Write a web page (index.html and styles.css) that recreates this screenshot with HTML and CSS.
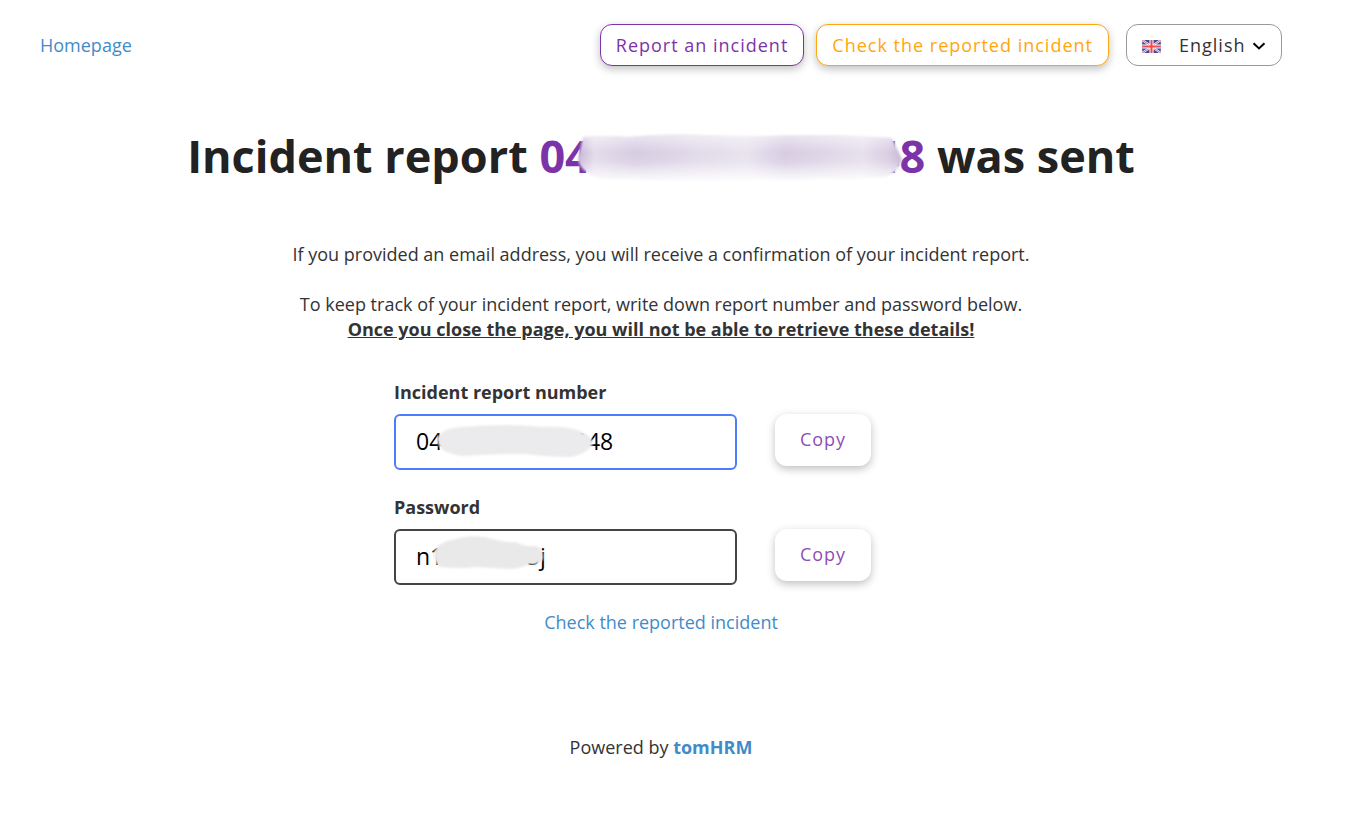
FILE: index.html
```html
<!DOCTYPE html>
<html lang="en">
<head>
  <meta charset="UTF-8">
  <meta name="viewport" content="width=device-width, initial-scale=1">
  <title>Incident report was sent</title>
  <link rel="stylesheet" href="styles.css">
</head>
<body>

  <header class="header">
    <a href="#" class="link">Homepage</a>
    <nav class="nav-buttons">
      <button type="button" class="button button-report">Report an incident</button>
      <button type="button" class="button button-check">Check the reported incident</button>
      <div class="language">
        <svg class="flag" viewBox="0 0 20 14" aria-hidden="true">
          <rect width="20" height="14" fill="#3a4a9f"/>
          <path d="M0 0L20 14M20 0L0 14" stroke="#f0e6f0" stroke-width="2.4"/>
          <path d="M0 0L20 14M20 0L0 14" stroke="#e8606a" stroke-width="1"/>
          <path d="M10 0V14M0 7H20" stroke="#fff" stroke-width="4.4"/>
          <path d="M10 0V14M0 7H20" stroke="#ea4a50" stroke-width="2.2"/>
        </svg>
        <select class="language-select" aria-label="Language">
          <option>English</option>
        </select>
        <svg class="chevron" viewBox="0 0 14 8" aria-hidden="true">
          <path d="M1.5 1.2L7 6.4L12.5 1.2" fill="none" stroke="#000" stroke-width="2"/>
        </svg>
      </div>
    </nav>
  </header>

  <main class="content">
    <h1 class="title">Incident report
      <span class="number">040000000000048<svg class="smudge smudge-title" viewBox="0 0 328 48" preserveAspectRatio="none" aria-hidden="true">
        <defs>
          <linearGradient id="title-fill">
            <stop offset="0" stop-color="#c6b6d6"/>
            <stop offset=".05" stop-color="#e3dcea"/>
            <stop offset=".18" stop-color="#d7cce2"/>
            <stop offset=".38" stop-color="#e2dbea"/>
            <stop offset=".52" stop-color="#e8e3ef"/>
            <stop offset=".64" stop-color="#d7cce2"/>
            <stop offset=".88" stop-color="#e6e0ec"/>
            <stop offset=".96" stop-color="#d8cde2"/>
            <stop offset="1" stop-color="#c6b6d6"/>
          </linearGradient>
          <linearGradient id="title-shade" x2="0" y2="1">
            <stop offset="0" stop-color="#fff" stop-opacity=".5"/>
            <stop offset=".4" stop-color="#fff" stop-opacity="0"/>
            <stop offset=".6" stop-color="#fff" stop-opacity=".1"/>
            <stop offset="1" stop-color="#fff" stop-opacity=".9"/>
          </linearGradient>
          <filter id="soft" x="-5%" y="-10%" width="110%" height="120%"><feGaussianBlur stdDeviation="1"/></filter>
        </defs>
        <g filter="url(#soft)">
          <path d="M7 4Q30 2 52 4Q90 0 128 2Q160 3 190 3Q240 1 282 3L316 5L326 26Q322 42 306 44Q260 47 190 46Q90 48 24 45Q4 39 2 26Z" fill="url(#title-fill)"/>
          <path d="M7 4Q30 2 52 4Q90 0 128 2Q160 3 190 3Q240 1 282 3L316 5L326 26Q322 42 306 44Q260 47 190 46Q90 48 24 45Q4 39 2 26Z" fill="url(#title-shade)"/>
        </g>
      </svg></span>
      was sent</h1>

    <p class="text">If you provided an email address, you will receive a confirmation of your incident report.</p>
    <p class="text">To keep track of your incident report, write down report number and password below.<br>
      <strong class="warning">Once you close the page, you will not be able to retrieve these details!</strong></p>

    <div class="details">
      <div class="field">
        <label class="label" for="report-number">Incident report number</label>
        <div class="input-wrap">
          <input type="text" id="report-number" class="input input-active" value="040000000000048" readonly>
          <svg class="smudge smudge-number" viewBox="0 0 156 34" aria-hidden="true">
            <path d="M0 14Q6 4 24 3Q74-1 104 3Q132 2 142 7Q156 12 156 20Q150 30 134 33Q112 33 88 30Q52 30 26 32Q8 30 2 22Z" fill="#ebebed"/>
          </svg>
        </div>
      </div>
      <button type="button" class="button button-copy">Copy</button>

      <div class="field">
        <label class="label" for="password">Password</label>
        <div class="input-wrap">
          <input type="text" id="password" class="input" value="n100w0003j" readonly>
          <svg class="smudge smudge-password" viewBox="0 0 110 36" aria-hidden="true">
            <path d="M0 18Q2 8 18 5Q42-2 58 4Q74 8 82 7Q90 12 102 11Q110 14 109 24Q106 30 96 29Q84 34 76 34Q58 33 42 32Q28 34 6 32Q0 28 0 18Z" fill="#e9e9e9"/>
          </svg>
        </div>
      </div>
      <button type="button" class="button button-copy">Copy</button>
    </div>

    <a href="#" class="link">Check the reported incident</a>
  </main>

  <footer class="footer">
    Powered by <a href="#" class="link link-brand">tomHRM</a>
  </footer>

</body>
</html>
```
FILE: styles.css
```css
:root {
  --text: #333;
  --heading: #222;
  --purple: #7d33a8;
  --orange: #ffa60d;
  --link: #428bca;
  --shadow: 0 3px 8px rgba(0, 0, 0, 0.25);
}

* {
  box-sizing: border-box;
}

body {
  margin: 0;
  padding: 24px 77px 40px 40px;
  background: #fff;
  color: var(--text);
  font-family: 'Open Sans', sans-serif;
  font-size: 18px;
  line-height: 25px;
}

.header {
  display: flex;
  justify-content: space-between;
  align-items: center;
}

.nav-buttons {
  display: flex;
  align-items: center;
  gap: 12px;
}

.link {
  color: var(--link);
  text-decoration: none;
}

.link-brand {
  font-weight: 700;
}

.button {
  height: 42px;
  padding: 0 15px;
  background: #fff;
  border: 1px solid transparent;
  border-radius: 12px;
  box-shadow: var(--shadow);
  font-family: inherit;
  font-size: 18px;
  letter-spacing: 1px;
  white-space: nowrap;
  cursor: pointer;
}

.button-report {
  color: var(--purple);
  border-color: var(--purple);
}

.button-check {
  color: var(--orange);
  border-color: var(--orange);
}

.button-copy {
  height: 52px;
  padding-bottom: 2px;
  color: #8f4db5;
}

.language {
  position: relative;
  margin-left: 5px;
}

.language-select {
  width: 156px;
  height: 42px;
  padding: 0 34px 0 52px;
  appearance: none;
  background: #fff;
  border: 1px solid #999;
  border-radius: 12px;
  color: var(--text);
  font-family: inherit;
  font-size: 18px;
  letter-spacing: 1px;
}

.flag,
.chevron {
  position: absolute;
  pointer-events: none;
}

.flag {
  top: 16px;
  left: 16px;
  width: 19px;
  height: 13px;
}

.chevron {
  top: 18px;
  right: 16px;
  width: 14px;
  height: 8px;
}

.content {
  display: flex;
  flex-direction: column;
  align-items: center;
  text-align: center;
}

.title {
  margin: 58px 0 54px;
  color: var(--heading);
  font-size: 45px;
  line-height: 64px;
}

.number {
  position: relative;
  color: var(--purple);
}

.text {
  margin: 0 0 25px;
}

.warning {
  text-decoration: underline;
}

.details {
  display: grid;
  grid-template-columns: 343px 96px;
  column-gap: 38px;
  row-gap: 25px;
  width: 534px;
  max-width: 100%;
  margin: 13px 0 25px;
  text-align: left;
}

.label {
  display: block;
  margin-bottom: 9px;
  font-weight: 700;
}

.input-wrap {
  position: relative;
}

.input {
  display: block;
  width: 100%;
  height: 56px;
  padding: 0 20px 2px;
  border: 2px solid #444;
  border-radius: 6px;
  outline: none;
  color: #000;
  font-family: inherit;
  font-size: 23px;
}

.input-active {
  border-color: #4d7dff;
}

.details .button-copy {
  margin-top: 34px;
}

/* blurred patches over the private values */
.smudge {
  position: absolute;
  pointer-events: none;
}

.smudge-title {
  top: 8px;
  left: 37px;
  width: 328px;
  height: 48px;
}

.smudge-number {
  top: 10px;
  left: 43px;
  width: 156px;
  height: 34px;
  filter: blur(1px);
}

.smudge-password {
  top: 6px;
  left: 40px;
  width: 110px;
  height: 36px;
  filter: blur(1px);
}

.footer {
  margin-top: 100px;
  text-align: center;
}
```
